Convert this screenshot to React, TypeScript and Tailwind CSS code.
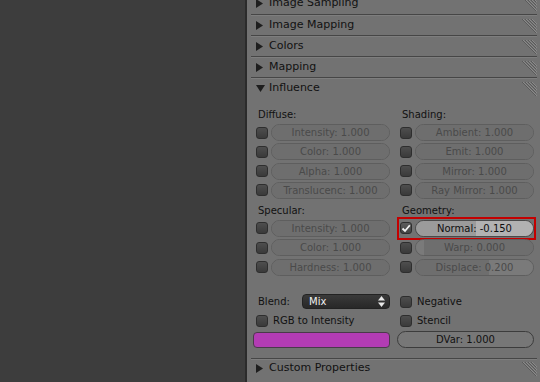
import React from "react";

type Row = { label: string; value: string; fill?: number; tail?: number; active?: boolean; checked?: boolean };

const diffuse: Row[] = [
  { label: "Intensity", value: "1.000" },
  { label: "Color", value: "1.000" },
  { label: "Alpha", value: "1.000" },
  { label: "Translucenc", value: "1.000" },
];
const shading: Row[] = [
  { label: "Ambient", value: "1.000" },
  { label: "Emit", value: "1.000" },
  { label: "Mirror", value: "1.000" },
  { label: "Ray Mirror", value: "1.000" },
];
const specular: Row[] = [
  { label: "Intensity", value: "1.000" },
  { label: "Color", value: "1.000" },
  { label: "Hardness", value: "1.000" },
];
const geometry: Row[] = [
  { label: "Normal", value: "-0.150", fill: 51, active: true, checked: true },
  { label: "Warp", value: "0.000", fill: 7 },
  { label: "Displace", value: "0.200", tail: 62 },
];

const Grip = () => (
  <svg width="15" height="14" viewBox="0 0 15 14" className="self-start mt-[1px]">
    {[0, 3, 6, 9].map((x) => (
      <g key={x}>
        <line x1={x} y1={0} x2={14} y2={14 - x} stroke="#5a5a5a" strokeWidth="1" />
        <line x1={x + 1} y1={0} x2={15} y2={14 - x} stroke="#8a8a8a" strokeWidth="1" />
      </g>
    ))}
  </svg>
);

const Header = ({ title, open, first }: { title: string; open?: boolean; first?: boolean }) => (
  <div
    className={
      "flex items-center h-[21px] mx-[4px] mr-[3px] " +
      (first ? "mt-[-7px]" : "border-t border-[#464646] shadow-[inset_0_1px_0_#7e7e7e]")
    }
  >
    <div className="w-[18px] pl-[5px] flex items-center">
      {open ? (
        <svg width="9" height="7" viewBox="0 0 9 7">
          <polygon points="0,0 9,0 4.5,7" fill="#1e1e1e" />
        </svg>
      ) : (
        <svg width="7" height="9" viewBox="0 0 7 9">
          <polygon points="0,0 7,4.5 0,9" fill="#1e1e1e" />
        </svg>
      )}
    </div>
    <span className="text-[11px] text-[#111]">{title}</span>
    <div className="ml-auto">
      <Grip />
    </div>
  </div>
);

const Check = ({ checked }: { checked?: boolean }) => (
  <div
    className={
      "w-[12px] h-[12px] shrink-0 rounded-[3px] border border-[#2e2e2e] flex items-center justify-center " +
      (checked ? "bg-gradient-to-b from-[#5c5c5c] to-[#444]" : "bg-gradient-to-b from-[#4e4e4e] to-[#3a3a3a]")
    }
  >
    {checked && (
      <svg width="10" height="9" viewBox="0 0 10 9">
        <path d="M1.5 4.5 L4 7 L8.8 1.2" fill="none" stroke="#f2f2f2" strokeWidth="1.8" />
      </svg>
    )}
  </div>
);

const Slider = ({ row }: { row: Row }) => {
  const base = row.active ? "bg-[#9b9b9b]" : "bg-[#6e6e6e]";
  const light = row.active ? "bg-[#b2b2b2]" : "bg-[#7a7a7a]";
  return (
    <div
      className={
        "relative flex-1 h-[17px] rounded-full overflow-hidden flex border " +
        (row.active ? "border-[#4a4a4a]" : "border-[#5e5e5e]")
      }
    >
      {row.fill !== undefined && (
        <>
          <div className={row.active ? base : light} style={{ width: row.fill + "%" }} />
          <div className={"flex-1 " + (row.active ? light : base)} />
        </>
      )}
      {row.tail !== undefined && (
        <>
          <div className={base} style={{ width: row.tail + "%" }} />
          <div className={"flex-1 " + light} />
        </>
      )}
      {row.fill === undefined && row.tail === undefined && <div className={"flex-1 " + base} />}
      <div
        className={
          "absolute inset-0 flex items-center justify-center text-[10px] " +
          (row.active ? "text-[#0e0e0e]" : "text-[#4a4a4a]")
        }
      >
        {row.label}: {row.value}
      </div>
    </div>
  );
};

const SliderRow = ({ row }: { row: Row }) => (
  <div className="relative flex items-center gap-[3px] pl-[3px]">
    <Check checked={row.checked} />
    <Slider row={row} />
    {row.active && (
      <div className="absolute left-0 right-[-2px] top-[-3px] bottom-[-3px] border-2 border-[#c40000] pointer-events-none" />
    )}
  </div>
);

const Group = ({ title, rows }: { title: string; rows: Row[] }) => (
  <div className="flex flex-col">
    <div className="h-[19px] flex items-center pl-[5px] text-[10px] text-[#111]">{title}</div>
    <div className="flex flex-col gap-[2.33px]">
      {rows.map((r, i) => (
        <SliderRow key={i} row={r} />
      ))}
    </div>
  </div>
);

const Toggle = ({ label }: { label: string }) => (
  <div className="h-[16px] flex items-center gap-[5px] pl-[3px]">
    <Check />
    <span className="text-[10px] text-[#111]">{label}</span>
  </div>
);

export default function App() {
  return (
    <div className="flex h-[382px] w-[540px] overflow-hidden font-['DejaVu_Sans',sans-serif]">
      <div className="w-[245px] bg-[#3d3d3d]" />
      <div className="w-[2px] bg-[#2b2b2b]" />
      <div className="flex-1 bg-[#727272] flex flex-col">
        <Header title="Image Sampling" first />
        <Header title="Image Mapping" />
        <Header title="Colors" />
        <Header title="Mapping" />
        <Header title="Influence" open />
        <div className="px-[6px] pt-[7px]">
          <div className="grid grid-cols-2 gap-x-[7px]">
            <Group title="Diffuse:" rows={diffuse} />
            <Group title="Shading:" rows={shading} />
          </div>
          <div className="grid grid-cols-2 gap-x-[7px] mt-[2px]">
            <Group title="Specular:" rows={specular} />
            <Group title="Geometry:" rows={geometry} />
          </div>
          <div className="grid grid-cols-2 gap-x-[7px] mt-[18px]">
            <div className="flex flex-col gap-[3px]">
              <div className="h-[16px] flex items-center">
                <span className="w-[49px] pl-[5px] text-[10px] text-[#111]">Blend:</span>
                <div className="flex-1 h-[15px] rounded-[4px] border border-[#222] bg-gradient-to-b from-[#3a3a3a] to-[#282828] flex items-center pl-[6px] pr-[4px]">
                  <span className="text-[10px] text-[#f0f0f0]">Mix</span>
                  <svg width="7" height="11" viewBox="0 0 7 11" className="ml-auto">
                    <polygon points="0,4.5 7,4.5 3.5,0" fill="#e8e8e8" />
                    <polygon points="0,6.5 7,6.5 3.5,11" fill="#e8e8e8" />
                  </svg>
                </div>
              </div>
              <Toggle label="RGB to Intensity" />
              <div className="h-[16px] rounded-[4px] border border-[#4a3a4a] bg-[#b33cb4]" />
            </div>
            <div className="flex flex-col">
              <Toggle label="Negative" />
              <div className="mt-[3px]">
                <Toggle label="Stencil" />
              </div>
              <div className="mt-[2px] h-[17px] rounded-full border border-[#3c3c3c] bg-[#777] flex items-center justify-center text-[10px] text-[#111]">
                DVar: 1.000
              </div>
            </div>
          </div>
        </div>
        <div className="mt-[10px]">
          <Header title="Custom Properties" />
        </div>
      </div>
    </div>
  );
}
